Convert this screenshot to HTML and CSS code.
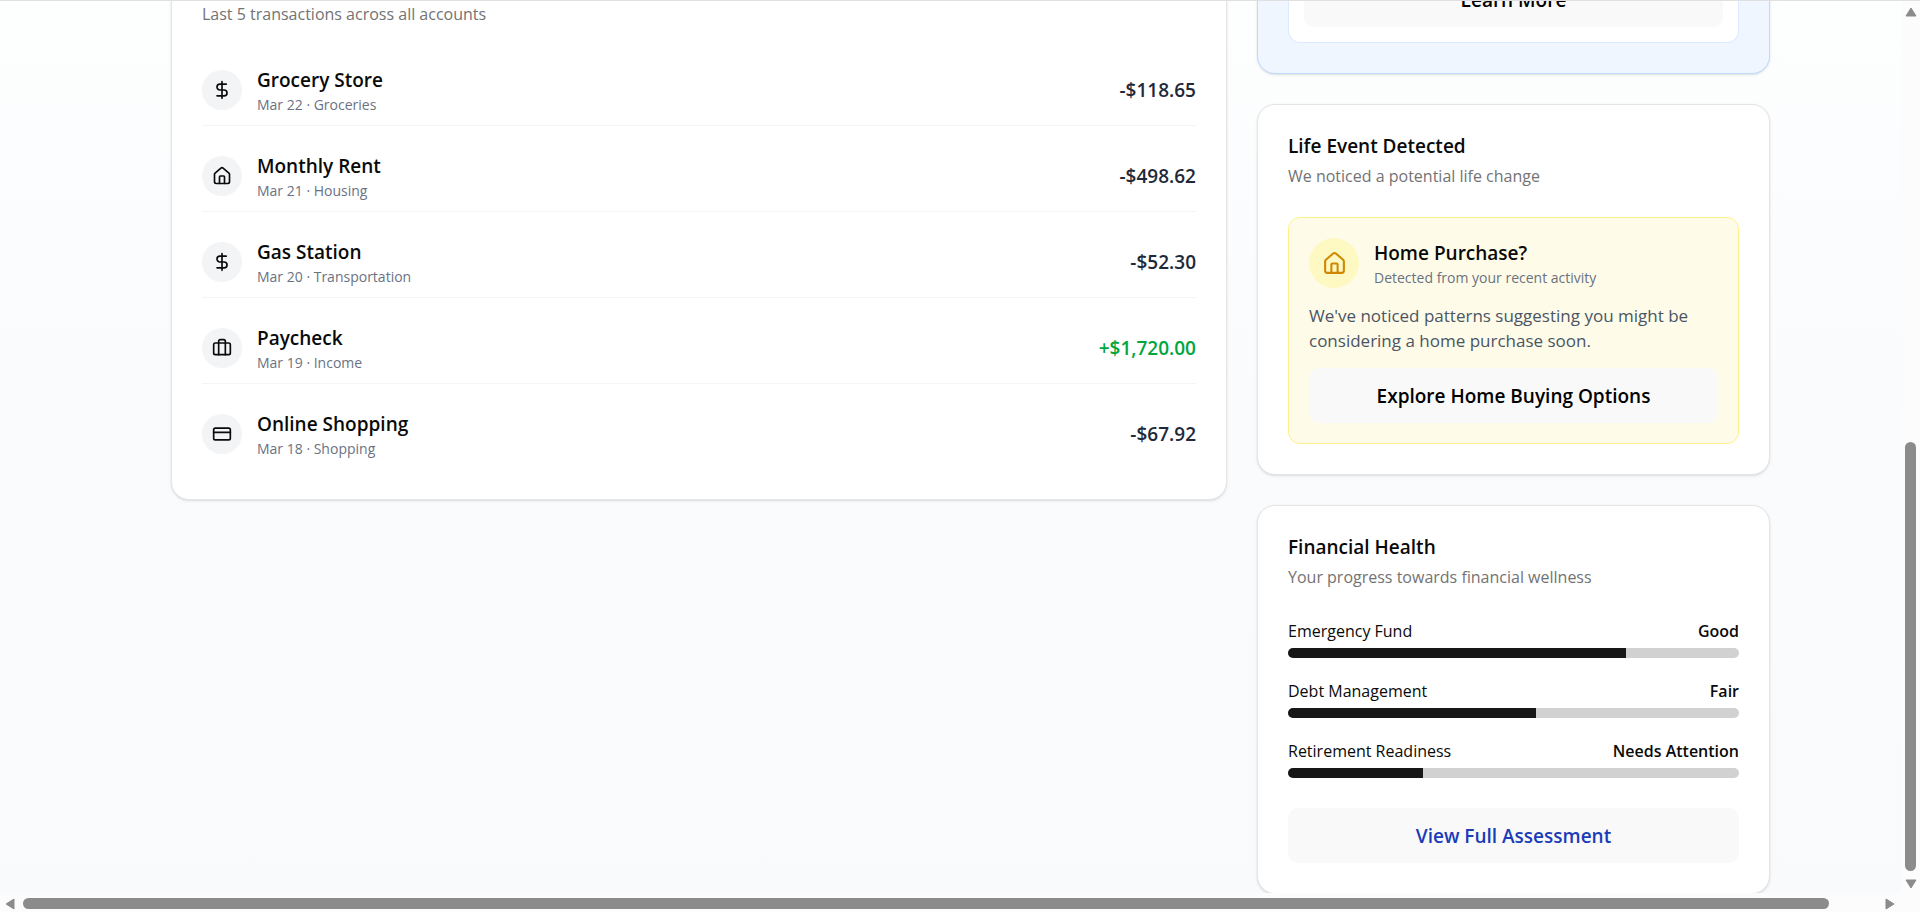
FILE: index.html
```html
<!DOCTYPE html>
<html lang="en">
<head>
<meta charset="utf-8">
<title>Dashboard</title>
<link rel="stylesheet" href="styles.css">
</head>
<body>
<svg class="sprite" aria-hidden="true">
  <symbol id="i-dollar" viewBox="0 0 24 24"><path d="M12 2v20"/><path d="M17 5H9.5a3.5 3.5 0 0 0 0 7h5a3.5 3.5 0 0 1 0 7H6"/></symbol>
  <symbol id="i-house" viewBox="0 0 24 24"><path d="M15 21v-8a1 1 0 0 0-1-1h-4a1 1 0 0 0-1 1v8"/><path d="M3 10a2 2 0 0 1 .709-1.528l7-5.999a2 2 0 0 1 2.582 0l7 5.999A2 2 0 0 1 21 10v9a2 2 0 0 1-2 2H5a2 2 0 0 1-2-2z"/></symbol>
  <symbol id="i-briefcase" viewBox="0 0 24 24"><path d="M16 20V4a2 2 0 0 0-2-2h-4a2 2 0 0 0-2 2v16"/><rect width="20" height="14" x="2" y="6" rx="2"/></symbol>
  <symbol id="i-card" viewBox="0 0 24 24"><rect width="20" height="14" x="2" y="5" rx="2"/><path d="M2 10h20"/></symbol>
</svg>
<div class="shell">
  <div class="viewport">
    <main class="dashboard">
      <section class="card transactions" aria-label="Recent transactions">
        <header class="card-header">
          <p class="card-desc">Last 5 transactions across all accounts</p>
        </header>
        <ul class="tx-list">
          <li class="tx">
            <span class="tx-icon"><svg class="icon"><use href="#i-dollar"/></svg></span>
            <div class="tx-text"><p class="name">Grocery Store</p><p class="meta">Mar 22 · Groceries</p></div>
            <span class="amount">-$118.65</span>
          </li>
          <li class="tx">
            <span class="tx-icon"><svg class="icon"><use href="#i-house"/></svg></span>
            <div class="tx-text"><p class="name">Monthly Rent</p><p class="meta">Mar 21 · Housing</p></div>
            <span class="amount">-$498.62</span>
          </li>
          <li class="tx">
            <span class="tx-icon"><svg class="icon"><use href="#i-dollar"/></svg></span>
            <div class="tx-text"><p class="name">Gas Station</p><p class="meta">Mar 20 · Transportation</p></div>
            <span class="amount">-$52.30</span>
          </li>
          <li class="tx">
            <span class="tx-icon"><svg class="icon"><use href="#i-briefcase"/></svg></span>
            <div class="tx-text"><p class="name">Paycheck</p><p class="meta">Mar 19 · Income</p></div>
            <span class="amount income">+$1,720.00</span>
          </li>
          <li class="tx">
            <span class="tx-icon"><svg class="icon"><use href="#i-card"/></svg></span>
            <div class="tx-text"><p class="name">Online Shopping</p><p class="meta">Mar 18 · Shopping</p></div>
            <span class="amount">-$67.92</span>
          </li>
        </ul>
      </section>
      <aside class="side">
        <section class="card card-blue">
          <div class="offer"><button class="btn" type="button">Learn More</button></div>
        </section>
        <section class="card">
          <header class="card-header">
            <h2 class="card-title">Life Event Detected</h2>
            <p class="card-desc">We noticed a potential life change</p>
          </header>
          <div class="event">
            <div class="event-head">
              <span class="event-icon"><svg class="icon icon-lg"><use href="#i-house"/></svg></span>
              <div><h3 class="name">Home Purchase?</h3><p class="meta">Detected from your recent activity</p></div>
            </div>
            <p class="event-body">We've noticed patterns suggesting you might be considering a home purchase soon.</p>
            <button class="btn" type="button">Explore Home Buying Options</button>
          </div>
        </section>
        <section class="card">
          <header class="card-header">
            <h2 class="card-title">Financial Health</h2>
            <p class="card-desc">Your progress towards financial wellness</p>
          </header>
          <div class="meters">
            <div class="meter">
              <div class="meter-label"><span id="m1">Emergency Fund</span><strong>Good</strong></div>
              <div class="bar" role="progressbar" aria-labelledby="m1" aria-valuenow="75"><div class="fill" style="width:75%"></div></div>
            </div>
            <div class="meter">
              <div class="meter-label"><span id="m2">Debt Management</span><strong>Fair</strong></div>
              <div class="bar" role="progressbar" aria-labelledby="m2" aria-valuenow="55"><div class="fill" style="width:55%"></div></div>
            </div>
            <div class="meter">
              <div class="meter-label"><span id="m3">Retirement Readiness</span><strong>Needs Attention</strong></div>
              <div class="bar" role="progressbar" aria-labelledby="m3" aria-valuenow="30"><div class="fill" style="width:30%"></div></div>
            </div>
          </div>
          <button class="btn btn-link" type="button">View Full Assessment</button>
        </section>
      </aside>
    </main>
  </div>
  <div class="scroll scroll-y" aria-hidden="true">
    <svg class="arrow-y" viewBox="0 0 12 10"><path d="M6 1 11 9H1z"/></svg>
    <div class="track"><div class="thumb"></div></div>
    <svg class="arrow-y" viewBox="0 0 12 10"><path d="M6 9 1 1h10z"/></svg>
  </div>
  <div class="scroll scroll-x" aria-hidden="true">
    <svg class="arrow-x" viewBox="0 0 10 12"><path d="M1 6 9 1v10z"/></svg>
    <div class="track"><div class="thumb"></div></div>
    <svg class="arrow-x" viewBox="0 0 10 12"><path d="M9 6 1 11V1z"/></svg>
  </div>
</div>
</body>
</html>
```
FILE: styles.css
```css
* { box-sizing: border-box; margin: 0; padding: 0; }

body {
  font-family: "Open Sans", "Noto Sans", sans-serif;
  font-size: 16px;
  line-height: 25px;
  color: #0a0a0a;
}

.sprite { position: absolute; width: 0; height: 0; }

.shell {
  display: grid;
  grid-template: minmax(0, 1fr) 19px / minmax(0, 1fr) 19px;
  height: 100vh;
  border-top: 1px solid #e0e0e0;
  background: #fcfcfc;
}

.viewport {
  overflow: hidden;
  background: linear-gradient(#fdfefe, #fafbfd 50%, #f9fafc);
}

/* Scrolled to the end of the page */
.dashboard {
  display: grid;
  grid-template-columns: repeat(3, minmax(0, 1fr));
  gap: 30px;
  align-items: start;
  margin-top: -60px;
  padding: 0 131px 0 171px;
}

.side { display: grid; gap: 30px; }

.card {
  padding: 30px;
  border: 1px solid #e5e5e5;
  border-radius: 18px;
  background: #fff;
  box-shadow: 0 1px 3px rgba(0, 0, 0, .1), 0 1px 2px -1px rgba(0, 0, 0, .1);
}
.card-blue { border-color: #bedbff; background: #eff6ff; }
.transactions { grid-column: span 2; padding-top: 60px; }

.card-header { display: grid; gap: 7px; margin-bottom: 28px; }
.card-title { font-size: 19px; font-weight: 600; line-height: 22px; }
.card-desc { color: #737373; }

.tx-list { display: grid; gap: 15px; list-style: none; }
.tx {
  display: flex;
  align-items: center;
  gap: 15px;
  padding: 10px 0;
  border-bottom: 1px solid #f3f4f6;
}
.tx:last-child { border-bottom: 0; }
.tx-icon, .event-icon {
  display: grid;
  place-items: center;
  flex: none;
  border-radius: 50%;
}
.tx-icon { width: 40px; height: 40px; background: #f3f4f6; }
.tx-text { flex: 1; }
.name { font-size: 19px; font-weight: 600; line-height: 30px; }
.meta { font-size: 14px; line-height: 20px; color: #6a7282; }
.amount { font-size: 19px; font-weight: 600; color: #1e2939; }
.income { color: #00a63e; }

.icon {
  width: 20px;
  height: 20px;
  fill: none;
  stroke: currentColor;
  stroke-width: 2;
  stroke-linecap: round;
  stroke-linejoin: round;
}
.icon-lg { width: 25px; height: 25px; }

.btn {
  display: block;
  width: 100%;
  height: 55px;
  border: 0;
  border-radius: 10px;
  background: #f9f9f9;
  font: 600 19px "Open Sans", "Noto Sans", sans-serif;
  color: #000;
  cursor: pointer;
}
.btn-link { color: #193cb8; }

.offer {
  padding: 0 15px 15px;
  border: 1px solid #dbeafe;
  border-top: 0;
  border-radius: 0 0 12px 12px;
  background: #fff;
}

.event {
  display: grid;
  gap: 15px;
  padding: 20px;
  border: 1px solid #fff085;
  border-radius: 12px;
  background: #fefce8;
}
.event-head { display: flex; align-items: center; gap: 15px; }
.event-icon { width: 50px; height: 50px; background: #fef9c2; color: #d08700; }
.event-body { font-size: 17px; color: #4a5565; }

.meters { display: grid; gap: 20px; margin-bottom: 30px; }
.meter { display: grid; gap: 3px; line-height: 27px; }
.meter-label { display: flex; justify-content: space-between; }
.meter-label strong { font-weight: 600; }
.bar { height: 10px; overflow: hidden; border-radius: 5px; background: #d1d1d1; }
.fill { height: 100%; background: #171717; }

.scroll { display: flex; gap: 8px; fill: #8b8b8b; }
.scroll-y { flex-direction: column; padding: 6px 4px 4px; }
.scroll-x { padding: 5px 6px 3px 5px; }
.track { display: flex; flex: 1; }
.thumb { border-radius: 6px; background: #8b8b8b; }
.scroll-y .track { align-items: flex-end; }
.scroll-y .thumb { width: 11px; height: 50.7%; }
.scroll-x .track { padding-right: 48px; }
.scroll-x .thumb { flex: 1; height: 11px; }
.arrow-y { width: 12px; height: 10px; stroke: #8b8b8b; stroke-linejoin: round; }
.arrow-x { width: 10px; height: 12px; stroke: #8b8b8b; stroke-linejoin: round; }
```
